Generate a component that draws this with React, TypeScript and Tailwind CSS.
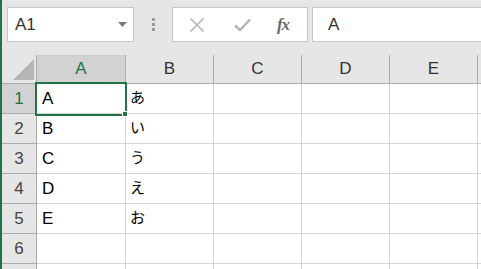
import { Fragment } from "react";

const cols = ["A", "B", "C", "D", "E"];
const rows: [string, string, string][] = [
  ["1", "A", "あ"],
  ["2", "B", "い"],
  ["3", "C", "う"],
  ["4", "D", "え"],
  ["5", "E", "お"],
  ["6", "", ""],
  ["", "", ""],
];

const font = { fontFamily: '"Liberation Sans", "Noto Sans CJK JP", sans-serif' };

export default function App() {
  return (
    <div
      className="w-[481px] h-[269px] overflow-hidden bg-[#e6e6e6] border-l-2 border-[#217346] flex flex-col"
      style={font}
    >
      {/* barre de formule */}
      <div className="flex items-start pt-[7px] pl-[5px] h-[55px] shrink-0">
        <div className="w-[127px] h-[35px] bg-white border border-[#c6c6c6] flex items-center pl-[7px] pr-[6px]">
          <span className="text-[17px] text-[#333] flex-1">A1</span>
          <svg width="9" height="5" viewBox="0 0 9 5">
            <path d="M0 0 L9 0 L4.5 5 Z" fill="#777" />
          </svg>
        </div>
        <div className="w-[38px] h-[35px] flex flex-col items-center justify-center gap-[2px]">
          <div className="w-[3px] h-[3px] bg-[#9a9a9a]" />
          <div className="w-[3px] h-[3px] bg-[#9a9a9a]" />
          <div className="w-[3px] h-[3px] bg-[#9a9a9a]" />
        </div>
        <div className="w-[136px] h-[35px] bg-white border border-[#c6c6c6] flex items-center">
          <div className="w-[46px] flex justify-center pl-[2px]">
            <svg width="16" height="16" viewBox="0 0 16 16">
              <path d="M1.5 1.5 L14.5 14.5 M14.5 1.5 L1.5 14.5" stroke="#b4b4b4" strokeWidth="1.6" />
            </svg>
          </div>
          <div className="w-[46px] flex justify-center">
            <svg width="17" height="14" viewBox="0 0 17 14">
              <path d="M1 7.5 L6 12 L16 1.5" stroke="#b4b4b4" strokeWidth="2.4" fill="none" />
            </svg>
          </div>
          <div className="flex-1 flex justify-center pr-[6px]">
            <span
              className="text-[17px] italic font-bold text-[#6a6a6a] tracking-[-1px]"
              style={{ fontFamily: '"Liberation Serif", serif' }}
            >
              fx
            </span>
          </div>
        </div>
        <div className="flex-1 ml-[4px] h-[35px] bg-white border border-[#c6c6c6] border-r-0 flex items-center pl-[15px]">
          <span className="text-[17px] text-[#333]">A</span>
        </div>
      </div>

      {/* feuille */}
      <div className="relative flex-1 bg-white">
        <div className="grid grid-cols-[35px_89px_88px_88px_88px_88px_88px]">
          {/* coin */}
          <div className="h-[29px] bg-[#e6e6e6] border-r border-b border-[#ababab] flex items-end justify-end pr-[2px] pb-[3px]">
            <svg width="21" height="21" viewBox="0 0 21 21">
              <path d="M21 0 L21 21 L0 21 Z" fill="#b5b5b5" />
            </svg>
          </div>
          {cols.map((c) => (
            <div
              key={c}
              className={
                c === "A"
                  ? "h-[29px] bg-[#d2d2d2] border-r border-b border-[#ababab] flex items-center justify-center text-[17px] text-[#217346]"
                  : "h-[29px] bg-[#e6e6e6] border-r border-b border-[#ababab] flex items-center justify-center text-[17px] text-[#333]"
              }
            >
              {c}
            </div>
          ))}
          <div className="h-[29px] bg-[#e6e6e6] border-b border-[#ababab]" />

          {rows.map(([n, a, b], i) => (
            <Fragment key={i}>
              <div
                className={
                  n === "1"
                    ? "h-[30px] bg-[#d2d2d2] border-r border-b border-[#ababab] flex items-center justify-center text-[17px] text-[#217346]"
                    : "h-[30px] bg-[#e6e6e6] border-r border-b border-[#ababab] flex items-center justify-center text-[17px] text-[#444]"
                }
              >
                {n}
              </div>
              <div className="h-[30px] border-r border-b border-[#d4d4d4] flex items-center pl-[5px] text-[17px] text-black">
                {a}
              </div>
              <div className="h-[30px] border-r border-b border-[#d4d4d4] flex items-center pl-[4px] text-[15px] text-black">
                {b}
              </div>
              <div className="h-[30px] border-r border-b border-[#d4d4d4]" />
              <div className="h-[30px] border-r border-b border-[#d4d4d4]" />
              <div className="h-[30px] border-r border-b border-[#d4d4d4]" />
              <div className="h-[30px] border-b border-[#d4d4d4]" />
            </Fragment>
          ))}
        </div>

        {/* sélection A1 */}
        <div className="absolute left-[33px] top-[27px] w-[92px] h-[34px] border-2 border-[#217346]" />
        <div className="absolute left-[120px] top-[56px] w-[6px] h-[6px] bg-[#217346] border border-white" />
      </div>
    </div>
  );
}
